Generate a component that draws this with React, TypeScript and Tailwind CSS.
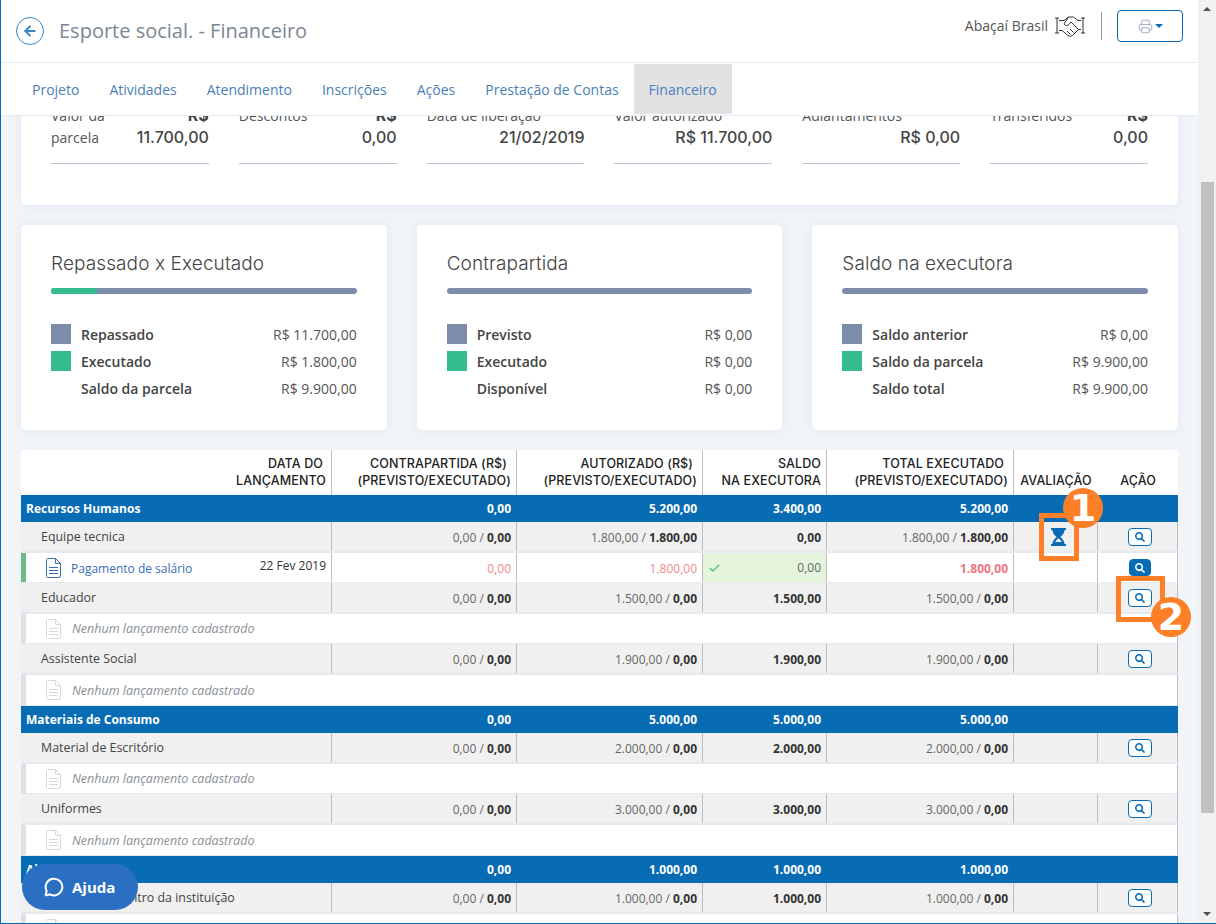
import { ArrowLeft, Check, MessageCircle, Printer } from 'lucide-react';
import { FaSearch } from 'react-icons/fa';

const SANS = "font-['Open_Sans',sans-serif]";
const NUM = "font-['Inter',sans-serif]";

type Sub = { name: string; prev: string; exec: string; saldo: string; hourglass?: boolean };
type Group = { name: string; cp: string; aut: string; saldo: string; total: string; subs: Sub[] };

const GROUPS: Group[] = [
  {
    name: 'Recursos Humanos',
    cp: '0,00',
    aut: '5.200,00',
    saldo: '3.400,00',
    total: '5.200,00',
    subs: [
      { name: 'Equipe tecnica', prev: '1.800,00', exec: '1.800,00', saldo: '0,00', hourglass: true },
      { name: 'Educador', prev: '1.500,00', exec: '0,00', saldo: '1.500,00' },
      { name: 'Assistente Social', prev: '1.900,00', exec: '0,00', saldo: '1.900,00' },
    ],
  },
  {
    name: 'Materiais de Consumo',
    cp: '0,00',
    aut: '5.000,00',
    saldo: '5.000,00',
    total: '5.000,00',
    subs: [
      { name: 'Material de Escritório', prev: '2.000,00', exec: '0,00', saldo: '2.000,00' },
      { name: 'Uniformes', prev: '3.000,00', exec: '0,00', saldo: '3.000,00' },
    ],
  },
  {
    name: 'Aluguel',
    cp: '0,00',
    aut: '1.000,00',
    saldo: '1.000,00',
    total: '1.000,00',
    subs: [{ name: 'Aluguel para centro da instituição', prev: '1.000,00', exec: '0,00', saldo: '1.000,00' }],
  },
];

const TABS = ['Projeto', 'Atividades', 'Atendimento', 'Inscrições', 'Ações', 'Prestação de Contas'];

const TOP = [
  { label: 'Valor da parcela', value: '11.700,00', wrap: true },
  { label: 'Descontos', value: '0,00', wrap: true },
  { label: 'Data de liberação', value: '21/02/2019' },
  { label: 'Valor autorizado', value: 'R$ 11.700,00' },
  { label: 'Adiantamentos', value: 'R$ 0,00' },
  { label: 'Transferidos', value: '0,00', wrap: true },
];

const CARDS = [
  {
    title: 'Repassado x Executado',
    pct: 15,
    rows: [
      ['Repassado', 'R$ 11.700,00'],
      ['Executado', 'R$ 1.800,00'],
      ['Saldo da parcela', 'R$ 9.900,00'],
    ],
  },
  {
    title: 'Contrapartida',
    pct: 0,
    rows: [
      ['Previsto', 'R$ 0,00'],
      ['Executado', 'R$ 0,00'],
      ['Disponível', 'R$ 0,00'],
    ],
  },
  {
    title: 'Saldo na executora',
    pct: 0,
    rows: [
      ['Saldo anterior', 'R$ 0,00'],
      ['Saldo da parcela', 'R$ 9.900,00'],
      ['Saldo total', 'R$ 9.900,00'],
    ],
  },
];

const GRID = 'grid grid-cols-[311px_185px_186px_124px_187px_84px_80px]';

function HandshakeIcon() {
  return (
    <svg width="32" height="24" viewBox="0 0 32 24" fill="none" stroke="#333" strokeWidth="1" className="ml-[6px]">
      <path d="M1 4h4M3 4v15M1 19h4M27 4h4M29 4v15M27 19h4" />
      <path d="M5 6.500h5l4.500-3.500h5l4.500 3.500h3" />
      <path d="M5 16.500h3l6 5c1.500 1 3 1 4.500 0l6-6h2.500" />
      <path d="M14.500 3l-4.500 7c1.500 2 3.500 2 5 .5l2-2.500 7.500 7.500" />
      <path d="M13 17l3.500 3.500M16 15l3.500 3.500" />
    </svg>
  );
}

function SearchBtn({ solid }: { solid?: boolean }) {
  return (
    <span
      className={`ml-[4px] flex items-center justify-center rounded-[4px] border border-[#086cb4] ${
        solid ? 'h-[17px] w-[22px] bg-[#086cb4] text-white' : 'h-[18px] w-[24px] bg-white text-[#086cb4]'
      }`}
    >
      <FaSearch size={10} />
    </span>
  );
}

function Hourglass() {
  return (
    <svg width="15" height="18" viewBox="0 0 15 18" className="text-[#086cb4]">
      <path
        fill="currentColor"
        d="M0 0h15v2h-1.500c0 3.500-2.500 5.500-4.200 7 1.700 1.500 4.200 3.500 4.200 7H15v2H0v-2h1.500c0-3.500 2.500-5.500 4.200-7-1.700-1.500-4.200-3.500-4.200-7H0z"
      />
      <path fill="#f0f0f0" d="M7.500 10.200c1.300 1 2.600 2.200 3.300 3.800H4.200c.7-1.600 2-2.800 3.300-3.800z" />
    </svg>
  );
}

function DocIcon({ color }: { color: string }) {
  return (
    <svg width="15" height="20" viewBox="0 0 15 20" fill="none" className="shrink-0">
      <path d="M1.500.5h8l5 5v12.500a1.500 1.500 0 0 1-1.500 1.500H1.500A1 1 0 0 1 .5 18.500v-17a1 1 0 0 1 1-1z" stroke={color} />
      <path d="M9.500.5v5h5" stroke={color} />
      <path d="M3 9.500h9M3 12.500h9M3 15.500h9" stroke={color} />
    </svg>
  );
}

function Cell({ children, className = '' }: { children?: React.ReactNode; className?: string }) {
  return (
    <div className={`flex items-center justify-end border-r border-[#bdbdbd] pr-[5px] pt-[2px] ${className}`}>{children}</div>
  );
}

function HeadCell({ top, bottom, shift }: { top: string; bottom: string; shift?: string }) {
  return (
    <div className="flex items-end justify-end border-r border-[#bdbdbd] pb-[6px] pr-[5px] text-right">
      <span>
        <span className={`inline-block ${shift ?? ''}`}>{top}</span>
        <br />
        {bottom}
      </span>
    </div>
  );
}

function Pair({ a, b }: { a: string; b: string }) {
  return (
    <span className="text-[#666]">
      {a} / <b className="font-bold text-[#333]">{b}</b>
    </span>
  );
}

function SubRow({ sub }: { sub: Sub }) {
  return (
    <div className={`${GRID} h-[31px] border-b-2 border-[#e6e9f0] bg-[#f0f0f0] text-[12px] ${SANS}`}>
      <div className="flex items-center border-r border-[#bdbdbd] pl-[20px] pt-[2px] text-[12.4px] font-medium text-[#444]">{sub.name}</div>
      <Cell>
        <Pair a="0,00" b="0,00" />
      </Cell>
      <Cell>
        <Pair a={sub.prev} b={sub.exec} />
      </Cell>
      <Cell className="font-bold text-[#333]">{sub.saldo}</Cell>
      <Cell>
        <Pair a={sub.prev} b={sub.exec} />
      </Cell>
      <div className="flex items-center justify-center border-r border-[#bdbdbd] pl-[5px]">
        {sub.hourglass && <Hourglass />}
      </div>
      <div className="flex items-center justify-center border-r border-[#bdbdbd]">
        <SearchBtn />
      </div>
    </div>
  );
}

function EmptyRow({ last }: { last: boolean }) {
  return (
    <div
      className={`flex items-center border-b border-l-[5px] border-r border-b-[#e6e9f0] border-l-[#e0e0e0] border-r-[#bdbdbd] bg-white pl-[20px] ${SANS} ${
        last ? 'h-[31px]' : 'h-[30px]'
      }`}
    >
      <DocIcon color="#d8d8d8" />
      <span className="ml-[11px] pt-[2px] text-[12.5px] italic text-[#8a8f96]">Nenhum lançamento cadastrado</span>
    </div>
  );
}

function EntryRow() {
  return (
    <div className={`${GRID} h-[30px] border-b border-[#e6e9f0] bg-white text-[12px] ${SANS}`}>
      <div className="flex items-center border-r border-l-[5px] border-r-[#bdbdbd] border-l-[#6fbb85] pl-[20px] pr-[5px]">
        <DocIcon color="#3a6db5" />
        <span className="ml-[10px] pt-[2px] text-[#3a6db5]">Pagamento de salário</span>
        <span className="ml-auto pb-[3px] text-[#333]">22 Fev 2019</span>
      </div>
      <Cell className="text-[#f08a8a]">0,00</Cell>
      <Cell className="text-[#f08a8a]">1.800,00</Cell>
      <div className="flex items-center justify-between border-r border-[#bdbdbd] bg-[#e5f5dc] pl-[5px] pr-[5px] pt-[1px] text-[#666]">
        <Check size={13} strokeWidth={2} className="text-[#33b48d]" />
        <span>0,00</span>
      </div>
      <Cell className="font-bold text-[#ee7480]">1.800,00</Cell>
      <div className="border-r border-[#bdbdbd]" />
      <div className="flex items-start justify-center border-r border-[#bdbdbd] pt-[6px]">
        <SearchBtn solid />
      </div>
    </div>
  );
}

export default function App() {
  return (
    <div className={`relative flex h-[924px] w-[1216px] overflow-hidden border-b border-l border-[#086cb4] bg-[#f1f5f9] ${SANS}`}>
      <div className="flex min-w-0 flex-1 flex-col">
        {/* header */}
        <header className="flex h-[63px] shrink-0 items-center border-b border-[#e3edf3] bg-white pl-[15px] pr-[15px]">
          <span className="flex h-[28px] w-[28px] items-center justify-center rounded-full border border-[#3a86c8] text-[#3a86c8]">
            <ArrowLeft size={16} strokeWidth={3} />
          </span>
          <h1 className="ml-[15px] text-[20px] text-[#7b8794]">Esporte social. - Financeiro</h1>
          <div className="mb-[10px] ml-auto flex items-center">
            <span className="pb-[2px] text-[14px] text-[#555]">Abaçaí Brasil</span>
            <HandshakeIcon />
            <span className="ml-[15px] h-[28px] w-px bg-[#999]" />
            <span className="ml-[15px] flex h-[32px] w-[66px] items-center justify-center gap-[2px] rounded-[4px] border border-[#086cb4] text-[#8b9bb4]">
              <Printer size={15} strokeWidth={1.3} />
              <span className="border-x-[4px] border-t-[4px] border-x-transparent border-t-[#086cb4]" />
            </span>
          </div>
        </header>

        {/* tabs */}
        <nav className="flex h-[53px] shrink-0 items-center gap-[30px] border-b border-[#e3edf3] bg-white pl-[31px] text-[14px] text-[#4a7fb5]">
          {TABS.map((t) => (
            <span key={t}>{t}</span>
          ))}
          <span className="-ml-[15px] flex h-[50px] items-center bg-[#e2e2e2] px-[15px] text-[#4a7fc0]">Financeiro</span>
        </nav>

        {/* page is scrolled, the first card runs under the tabs */}
        <main className="min-h-0 flex-1 overflow-hidden pl-[20px] pr-[20px]">
          <section className="-mt-[16px] rounded-b-[5px] bg-white pb-[41px] pl-[30px] pr-[30px] shadow-[0_0_12px_rgba(120,140,170,0.12)]">
            <div className="grid grid-cols-6 gap-x-[30px]">
              {TOP.map((c) => (
                <div key={c.label} className="flex h-[64px] justify-between border-b border-[#b8c5d6] pt-[4px] text-[14px] leading-[22px] text-[#555]">
                  <span className={`w-[60px] pt-[1px] ${c.label === 'Valor da parcela' ? '' : 'whitespace-nowrap'}`}>{c.label}</span>
                  <span className={`flex flex-col items-end text-[16px] font-medium text-[#444] ${NUM}`}>
                    {c.wrap ? <span className="font-bold">R$</span> : <span>&nbsp;</span>}
                    <span className="whitespace-nowrap">{c.value}</span>
                  </span>
                </div>
              ))}
            </div>
          </section>

          <div className="mt-[20px] grid grid-cols-3 gap-x-[30px]">
            {CARDS.map((c) => (
              <div key={c.title} className="h-[205px] rounded-[5px] bg-white px-[30px] pt-[26px] shadow-[0_0_12px_rgba(120,140,170,0.12)]">
                <h2 className={`text-[19px] font-light leading-[26px] tracking-[0.1px] text-[#444] ${NUM}`}>{c.title}</h2>
                <div className="mt-[11px] h-[6px] overflow-hidden rounded-full bg-[#7d8ca9]">
                  <div className="h-full bg-[#35bb90]" style={{ width: `${c.pct}%` }} />
                </div>
                <div className="mt-[30px] flex flex-col gap-[7px] text-[14px]">
                  {c.rows.map(([label, value], i) => (
                    <div key={label} className="flex h-[20px] items-center">
                      <span className={`h-[20px] w-[20px] ${i === 0 ? 'bg-[#7d8ca9]' : i === 1 ? 'bg-[#35bb90]' : ''}`} />
                      <span className="ml-[10px] font-semibold text-[#444]">{label}</span>
                      <span className="ml-auto text-[#555]">{value}</span>
                    </div>
                  ))}
                </div>
              </div>
            ))}
          </div>

          {/* table */}
          <div className="mt-[20px] bg-white">
            <div className={`${GRID} h-[45px] text-[12.5px] font-medium leading-[17px] tracking-[0.1px] text-[#222] ${NUM}`}>
              <HeadCell top="DATA DO" bottom="LANÇAMENTO" shift="mr-[3px]" />
              <HeadCell top="CONTRAPARTIDA (R$)" bottom="(PREVISTO/EXECUTADO)" shift="mr-[4px]" />
              <HeadCell top="AUTORIZADO (R$)" bottom="(PREVISTO/EXECUTADO)" shift="mr-[4px]" />
              <HeadCell top="SALDO" bottom="NA EXECUTORA" />
              <HeadCell top="TOTAL EXECUTADO" bottom="(PREVISTO/EXECUTADO)" shift="mr-[4px]" />
              <div className="flex items-end justify-center pb-[6px]">AVALIAÇÃO</div>
              <div className="flex items-end justify-center pb-[6px]">AÇÃO</div>
            </div>

            {GROUPS.map((g) => (
              <div key={g.name}>
                <div className={`${GRID} h-[27px] bg-[#086cb4] text-[12px] font-bold text-white ${SANS}`}>
                  <div className="flex items-center pl-[5px]">{g.name}</div>
                  <div className="flex items-center justify-end pr-[6px]">{g.cp}</div>
                  <div className="flex items-center justify-end pr-[6px]">{g.aut}</div>
                  <div className="flex items-center justify-end pr-[6px]">{g.saldo}</div>
                  <div className="flex items-center justify-end pr-[6px]">{g.total}</div>
                </div>
                {g.subs.map((s, i) => (
                  <div key={s.name}>
                    <SubRow sub={s} />
                    {g.name === 'Recursos Humanos' && i === 0 ? <EntryRow /> : <EmptyRow last={i === g.subs.length - 1} />}
                  </div>
                ))}
              </div>
            ))}
          </div>
        </main>
      </div>

      {/* scrollbar */}
      <div className="flex w-[18px] shrink-0 flex-col items-center bg-[#f1f1f1] pt-[7px]">
        <span className="border-x-[4px] border-b-[4px] border-x-transparent border-b-[#505050]" />
        <div className="mt-[171px] h-[631px] w-[13px] bg-[#c1c1c1]" />
        <span className="mt-[99px] border-x-[4px] border-t-[4px] border-x-transparent border-t-[#505050]" />
      </div>

      {/* annotations */}
      <span className="absolute left-[1038px] top-[513px] h-[48px] w-[40px] border-[5px] border-[#fd7f28]" />
      <span className="absolute left-[1115px] top-[576px] h-[46px] w-[49px] border-[5px] border-[#fd7f28]" />
      <span className="absolute left-[1062px] top-[488px] flex h-[40px] w-[40px] items-center justify-center rounded-full bg-[#fd7f28] font-['DejaVu_Sans',sans-serif] text-[38px] font-bold leading-none text-white">
        1
      </span>
      <span className="absolute left-[1150px] top-[597px] flex h-[40px] w-[40px] items-center justify-center rounded-full bg-[#fd7f28] font-['DejaVu_Sans',sans-serif] text-[38px] font-bold leading-none text-white">
        2
      </span>

      {/* help button */}
      <span className="absolute left-[21px] top-[864px] flex h-[46px] w-[116px] items-center gap-[8px] rounded-full bg-[#2a6fc2] pl-[22px] text-[15px] font-bold text-white">
        <MessageCircle size={20} strokeWidth={2.4} />
        Ajuda
      </span>
    </div>
  );
}
